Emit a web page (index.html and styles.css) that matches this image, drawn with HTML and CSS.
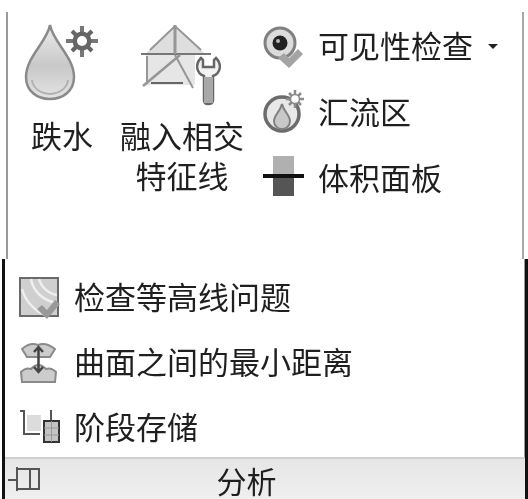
FILE: index.html
```html
<!DOCTYPE html>
<html lang="zh">
<head>
  <meta charset="UTF-8" />
  <title>分析</title>
  <link rel="stylesheet" href="styles.css">
</head>
<body>

<div class="panel">
  <div class="upper">
    <div class="big-button drop-button">
      <svg class="big-icon" width="80" height="84" viewBox="0 0 80 84">
        <defs>
          <linearGradient id="dropFill" x1="0" y1="0" x2="0" y2="1">
            <stop offset="0" stop-color="#ececec"/>
            <stop offset="0.55" stop-color="#c8c8c8"/>
            <stop offset="1" stop-color="#e4e4e4"/>
          </linearGradient>
        </defs>
        <path d="M28 3 C25 20 4 35 4 55 C4 69 15 77 28 77 C41 77 52 69 52 55 C52 35 31 20 28 3 Z" fill="url(#dropFill)" stroke="#8a8a8a" stroke-width="2.5"/>
        <path d="M10 58 C11 66 18 71 28 72 C38 71 45 66 46 58" fill="none" stroke="#b0b0b0" stroke-width="2"/>
        <g stroke="#666" stroke-width="4">
          <line x1="60" y1="4" x2="60" y2="35" stroke="#777"/>
          <line x1="44" y1="19" x2="76" y2="19" stroke="#777"/>
          <line x1="50" y1="9" x2="70" y2="29"/>
          <line x1="70" y1="9" x2="50" y2="29"/>
        </g>
        <circle cx="60" cy="19" r="9.5" fill="#666"/>
        <circle cx="60" cy="19" r="5" fill="#fff"/>
      </svg>
      <div class="big-label">跌水</div>
    </div>

    <div class="big-button cross-button">
      <svg class="big-icon" width="130" height="84" viewBox="0 0 130 84">
        <path d="M28 32 L58 4 L88 32 Z" fill="#dedede"/>
        <rect x="29" y="33" width="49" height="30" fill="#e6e6e6"/>
        <g fill="none" stroke="#969696" stroke-width="2">
          <path d="M33 28 L58 4 L84 28"/>
          <line x1="24" y1="32" x2="94" y2="32" stroke="#777"/>
          <line x1="58" y1="3" x2="58" y2="32" stroke-width="3"/>
          <path d="M30 34 L30 62"/>
          <line x1="34" y1="61" x2="66" y2="61" stroke="#666"/>
          <line x1="26" y1="64" x2="63" y2="33" stroke-width="2.5"/>
          <line x1="58" y1="33" x2="76" y2="66" stroke-width="2"/>
        </g>
        <path d="M84 36 C78 42 79 51 87 54 L87 78 Q87 82 91 82 Q96 82 96 78 L96 54 C104 51 105 42 99 36 L97 38 L97 45 L86 45 L86 38 Z" fill="#f2f2f2" stroke="#666" stroke-width="2.5"/>
        <rect x="87" y="55" width="9" height="26" fill="#a8a8a8"/>
      </svg>
      <div class="big-label">融入相交<br>特征线</div>
    </div>

    <div class="small-list">
      <div class="tool-row">
        <svg class="tool-icon" width="44" height="44" viewBox="0 0 44 44">
          <circle cx="18" cy="19" r="15" fill="#dcdcdc" stroke="#808080" stroke-width="3"/>
          <circle cx="18" cy="19" r="7.5" fill="#222"/>
          <circle cx="16" cy="17" r="2" fill="#bbb"/>
          <path d="M16 34 L22 29 L27 34 L36 25 L41 30 L27 44 Z" fill="#a4a4a4"/>
        </svg>
        <span class="tool-text">可见性检查</span>
        <span class="caret"></span>
      </div>
      <div class="tool-row">
        <svg class="tool-icon" width="44" height="44" viewBox="0 0 44 44">
          <circle cx="20" cy="24" r="17" fill="#e8e8e8" stroke="#6c6c6c" stroke-width="3.5"/>
          <path d="M20 14 C18 22 12 25 12 31 C12 36 16 39 20 39 C24 39 28 36 28 31 C28 25 22 22 20 14 Z" fill="#c8c8c8" stroke="#808080" stroke-width="2"/>
          <path d="M33 0 V18 M24 9 H42 M27 3 L39 15 M39 3 L27 15" stroke="#8c8c8c" stroke-width="2.5"/>
          <circle cx="33" cy="9" r="4.5" fill="#fff" stroke="#888" stroke-width="1.5"/>
        </svg>
        <span class="tool-text">汇流区</span>
      </div>
      <div class="tool-row">
        <svg class="tool-icon" width="44" height="44" viewBox="0 0 44 44">
          <rect x="11" y="0" width="21" height="20" fill="#b0b0b0"/>
          <rect x="11" y="20" width="21" height="20" fill="#555"/>
          <rect x="1" y="18" width="41" height="4" fill="#111"/>
        </svg>
        <span class="tool-text">体积面板</span>
      </div>
    </div>
  </div>

  <div class="lower">
    <div class="menu-list">
      <div class="menu-row">
        <svg class="menu-icon" width="42" height="42" viewBox="0 0 42 42">
          <rect x="1" y="1" width="38" height="38" fill="#cfcfcf" stroke="#6a6a6a" stroke-width="2"/>
          <g fill="none" stroke="#efefef" stroke-width="2.5">
            <path d="M12 2 C14 14 24 24 38 26"/>
            <path d="M20 2 C22 10 30 17 38 18"/>
            <path d="M3 12 C6 24 16 34 26 38"/>
          </g>
          <path d="M18 32 L23 28 L28 33 L36 23 L41 27 L28 42 Z" fill="#999"/>
        </svg>
        <span class="tool-text">检查等高线问题</span>
      </div>
      <div class="menu-row">
        <svg class="menu-icon" width="42" height="42" viewBox="0 0 42 42">
          <path d="M3 7 Q11 0 19 3 Q27 0 36 7 L31 15 L8 15 Z" fill="#ccc" stroke="#8a8a8a" stroke-width="2"/>
          <path d="M2 30 Q7 25 12 27 Q19 19 27 27 Q32 25 37 30 L36 40 L3 40 Z" fill="#ccc" stroke="#8a8a8a" stroke-width="2"/>
          <path d="M19.5 5 V30 M15 10 L19.5 5 L24 10 M15 25 L19.5 30 L24 25" fill="none" stroke="#444" stroke-width="2.5"/>
        </svg>
        <span class="tool-text">曲面之间的最小距离</span>
      </div>
      <div class="menu-row">
        <svg class="menu-icon" width="42" height="42" viewBox="0 0 42 42">
          <path d="M1 4 H5 V27 H21 M5 5 V28" fill="none" stroke="#555" stroke-width="2"/>
          <rect x="8" y="8" width="14" height="16" fill="#dcdcdc"/>
          <path d="M32 3 V13" stroke="#555" stroke-width="2"/>
          <rect x="25" y="14" width="15" height="21" fill="#c4c4c4" stroke="#333" stroke-width="2"/>
          <path d="M25 21 H40 M25 28 H40 M32.5 14 V35" stroke="#999"/>
        </svg>
        <span class="tool-text">阶段存储</span>
      </div>
    </div>
    <div class="title-bar">
      <svg class="pin-icon" width="36" height="26" viewBox="0 0 36 26">
        <path d="M3 14 H12 M12 1 V25 M12 3 H35 M12 23 H35 M34 3 V23 M25 3 V23" fill="none" stroke="#555" stroke-width="2"/>
      </svg>
      <span class="bar-title">分析</span>
    </div>
  </div>
</div>

</body>
</html>
```

FILE: styles.css
```css
* {
  margin: 0; padding: 0; box-sizing: border-box;
}

html, body {
  height: 100%;
  overflow: hidden;
  background: #fff;
}

body {
  font-family: "Noto Sans CJK SC", "Liberation Sans", sans-serif;
  font-size: 31px;
  color: #1f1f1f;
}

.panel {
  filter: blur(0.5px);
  padding-top: 12px;
}

.upper {
  display: flex;
  height: 247px;
  margin: 0 4px 0 6px;
  border-left: 2px solid #9a9a9a;
  border-right: 2px solid #a8a8a8;
}

.big-button {
  display: flex;
  flex-direction: column;
  align-items: center;
  padding-top: 10px;
}

.drop-button {
  width: 80px;
  margin-left: 14px;
}

.cross-button {
  width: 130px;
  margin-left: 15px;
}

.big-label {
  margin-top: 9px;
  line-height: 40px;
  text-align: center;
}

.small-list {
  display: flex;
  flex-direction: column;
  margin-left: 15px;
  padding-top: 1px;
}

.tool-row {
  display: flex;
  align-items: center;
  height: 66px;
  gap: 12px;
}

.tool-text {
  padding-bottom: 3px;
  line-height: 40px;
  white-space: nowrap;
}

.caret {
  width: 0;
  height: 0;
  margin-left: 3px;
  border-left: 5px solid transparent;
  border-right: 5px solid transparent;
  border-top: 5px solid #222;
}

.lower {
  margin-left: 2px;
  border-left: 3px solid #111;
  border-right: 3px solid #111;
  box-shadow: inset -1px 0 0 #999;
}

.menu-list {
  display: flex;
  flex-direction: column;
  gap: 6px;
  padding: 9px 0 0 14px;
}

.menu-row {
  display: flex;
  align-items: center;
  height: 59px;
  gap: 13px;
}

.title-bar {
  display: flex;
  align-items: center;
  justify-content: center;
  position: relative;
  height: 42px;
  border-top: 2px solid #cfcfcf;
  background: linear-gradient(#e6e6e6, #efefef);
}

.pin-icon {
  position: absolute;
  left: 0;
  top: 7px;
}

.bar-title {
  margin-top: 2px;
  margin-left: -37px;
  font-size: 30px;
  line-height: 36px;
}
```
